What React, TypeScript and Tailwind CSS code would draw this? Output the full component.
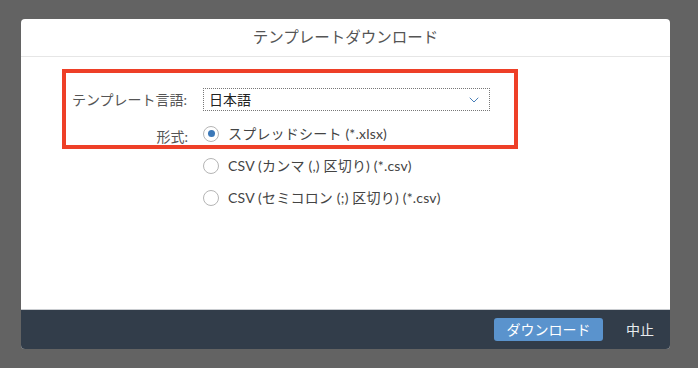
import { ChevronDown } from 'lucide-react';

const options = [
  { label: 'スプレッドシート (*.xlsx)', checked: true },
  { label: 'CSV (カンマ (,) 区切り) (*.csv)', checked: false },
  { label: 'CSV (セミコロン (;) 区切り) (*.csv)', checked: false },
];

function Radio({ checked }: { checked: boolean }) {
  return (
    <span className="flex h-[16px] w-[16px] shrink-0 items-center justify-center rounded-full border border-[#b5b5b5] bg-white">
      {checked && <span className="h-[7px] w-[7px] rounded-full bg-[#3b78b8]" />}
    </span>
  );
}

export default function App() {
  return (
    <div
      className="h-[368px] w-[698px] bg-[#636363] pl-[21px] pt-[19px]"
      style={{ fontFamily: 'Lato, "Noto Sans CJK JP", sans-serif' }}
    >
      <div className="flex h-[330px] w-[649px] flex-col overflow-hidden rounded-[4px] bg-white">
        {/* Header */}
        <div className="flex h-[38px] items-center justify-center border-b border-[#e6e6e6] text-[15.5px] text-[#555]">
          テンプレートダウンロード
        </div>

        {/* Body */}
        <div className="relative flex-1 pt-[31px]">
          <div className="absolute left-[41px] top-[12px] h-[80px] w-[456px] border-[4px] border-[#ee3f27]" />

          <div className="flex items-center">
            <div className="w-[167px] pr-[1px] text-right text-[14px] text-[#555]">テンプレート言語:</div>
            <div className="ml-[15px] flex h-[23px] w-[287px] items-center justify-between border border-dotted border-[#777] pl-[5px] pr-[7px] text-[14px] text-[#222]">
              <span>日本語</span>
              <ChevronDown className="h-[16px] w-[16px] text-[#4a7fb8]" strokeWidth={1.5} />
            </div>
          </div>

          <div className="mt-[13px] flex">
            <div className="w-[167px] pt-[2px] text-right text-[14px] text-[#555]">形式:</div>
            <div className="ml-[14px] flex flex-col gap-[13px]">
              {options.map((o) => (
                <div key={o.label} className="flex h-[19px] items-center gap-[9px] pl-[1px] text-[14px] tracking-[0.2px] text-[#444]">
                  <Radio checked={o.checked} />
                  <span>{o.label}</span>
                </div>
              ))}
            </div>
          </div>
        </div>

        {/* Footer */}
        <div className="flex h-[40px] items-center justify-end gap-[23px] border-t border-[#c9ccd0] bg-[#323d4a] pr-[16px]">
          <button className="flex h-[23px] w-[109px] items-center justify-center rounded-[3px] bg-[#5a93cd] text-[14px] text-white">
            ダウンロード
          </button>
          <button className="text-[14px] text-[#e8ebee]">中止</button>
        </div>
      </div>
    </div>
  );
}
